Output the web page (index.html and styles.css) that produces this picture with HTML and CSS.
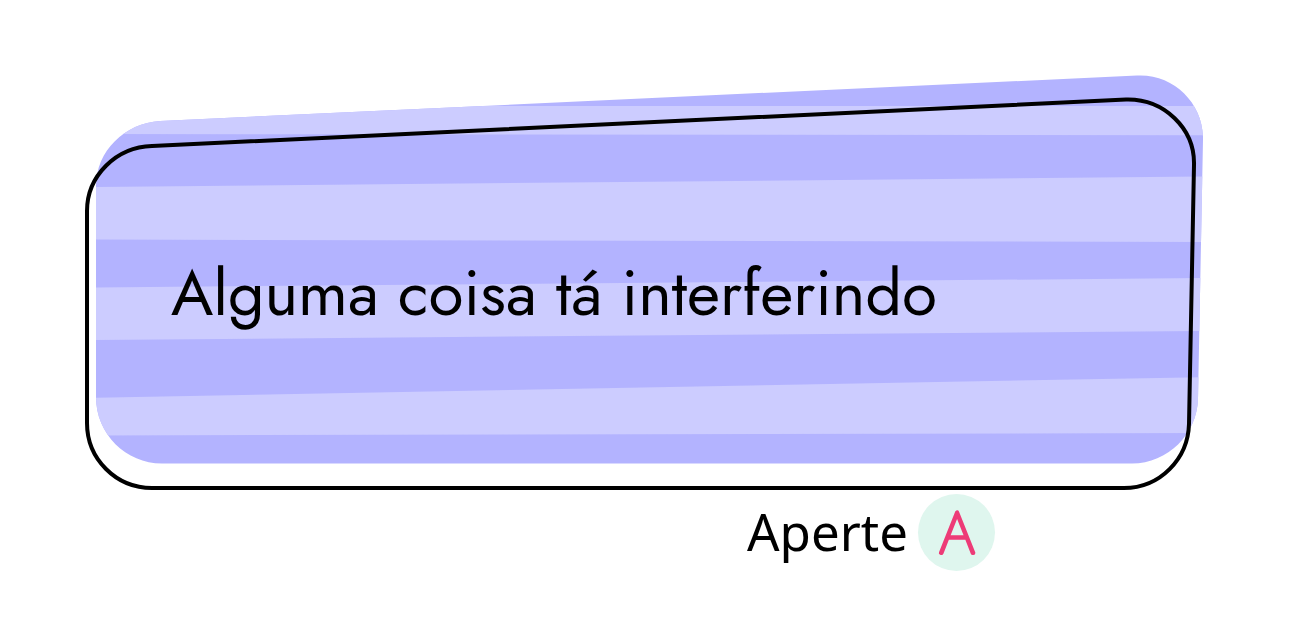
FILE: index.html
```html
<!DOCTYPE html>
<html lang="pt-BR">
<head>
<meta charset="utf-8">
<meta name="viewport" content="width=device-width, initial-scale=1">
<title>Alguma coisa tá interferindo</title>
<link rel="stylesheet" href="styles.css">
</head>
<body>
<main class="scene">
  <section class="dialog">
    <svg class="dialog-art" viewBox="85 75 1118 415" aria-hidden="true">
      <defs>
        <clipPath id="bubble">
          <path d="M96 186C96 151 125 123 160 121L1137 75.500C1174 73.500 1204 104 1203 140L1198 399C1197 434 1168 463.500 1132 463.500H162C126 463.500 96 434 96 397Z"/>
        </clipPath>
      </defs>
      <g clip-path="url(#bubble)">
        <path fill="#b3b3ff" d="M85 70H1210V470H85Z"/>
        <path fill="#ccccff" d="M85 106H1210V135.300L85 134Z"/>
        <path fill="#ccccff" d="M85 187L1210 176.500V242L85 239.500Z"/>
        <path fill="#ccccff" d="M85 287.500L1210 278V331L85 340Z"/>
        <path fill="#ccccff" d="M85 398L1210 377V433L85 435.500Z"/>
      </g>
      <path class="dialog-outline" d="M87 211C87 176 116 147 152 146L1126 99.500C1164 98.500 1195 128.500 1194 165L1189 424C1188 459 1160 488 1124 488H152C116 488 87 459 87 423Z"/>
    </svg>
    <p class="dialog-text">Alguma coisa tá interferindo</p>
  </section>
  <div class="prompt">
    <label class="prompt-label" for="key-a">Aperte</label>
    <button class="key" id="key-a" type="button">
      <svg class="key-face" viewBox="0 0 77 77">
        <text class="key-letter" x="39" y="59" text-anchor="middle">A</text>
      </svg>
    </button>
  </div>
</main>
</body>
</html>
```
FILE: styles.css
```css
body {
  margin: 0;
  background: #fff;
  color: #000;
}

.scene {
  padding: 75px 87px 40px 85px;
}

.dialog {
  display: grid;
}

.dialog-art {
  grid-area: 1 / 1;
  display: block;
  width: 100%;
  height: auto;
}

.dialog-outline {
  fill: none;
  stroke: #000;
  stroke-width: 4;
}

.dialog-text {
  grid-area: 1 / 1;
  align-self: center;
  margin: 0;
  padding: 20px 80px 0 86px;
  font: 400 64px/72px Futura, Jost, Lato, sans-serif;
}

.prompt {
  display: flex;
  align-items: center;
  justify-content: flex-end;
  gap: 10px;
  margin-top: 4px;
  padding-right: 208px;
}

.prompt-label {
  padding-bottom: 4px;
  font: 400 51px/72px "Noto Sans", sans-serif;
}

.key {
  width: 77px;
  height: 77px;
  padding: 0;
  border: 0;
  border-radius: 50%;
  background: #dff6ee;
  cursor: pointer;
}

.key-face {
  display: block;
  width: 100%;
  height: 100%;
  overflow: visible;
}

.key-letter {
  fill: #ed3b77;
  stroke: #ed3b77;
  stroke-width: 4;
  stroke-linejoin: round;
  font: 100 57px Jost, Lato, sans-serif;
}
```
